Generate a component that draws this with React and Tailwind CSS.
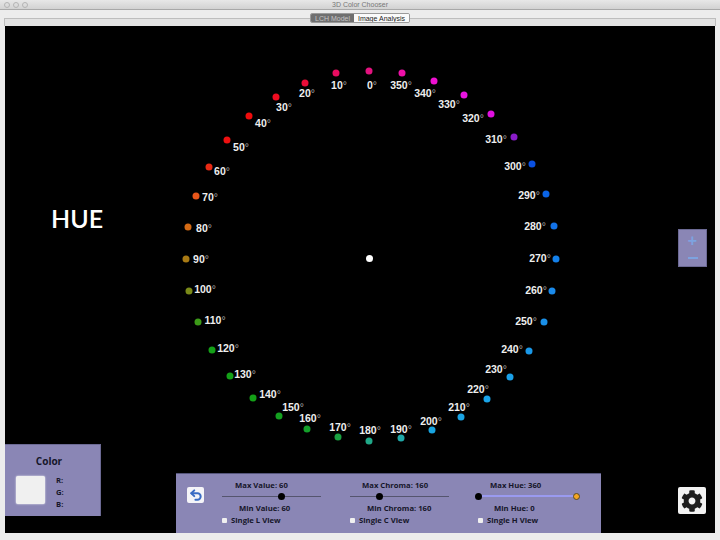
import React from 'react';
import { Undo2 } from 'lucide-react';
import { FaCog } from 'react-icons/fa';

// dot and label centres are in page coordinates, the canvas starts at 5,26
const hues = [
  { deg: 0, x: 369, y: 71, lx: 372, ly: 85, color: '#e3127f' },
  { deg: 350, x: 402, y: 73, lx: 401, ly: 85, color: '#ee10a8' },
  { deg: 340, x: 434, y: 81, lx: 425, ly: 93, color: '#ee10d0' },
  { deg: 330, x: 464, y: 95, lx: 449, ly: 104, color: '#e814e0' },
  { deg: 320, x: 491, y: 114, lx: 473, ly: 118, color: '#e010e0' },
  { deg: 310, x: 514, y: 137, lx: 496, ly: 139, color: '#8a1cc8' },
  { deg: 300, x: 532, y: 164, lx: 515, ly: 166, color: '#0a50e0' },
  { deg: 290, x: 546, y: 194, lx: 529, ly: 195, color: '#0a64e6' },
  { deg: 280, x: 554, y: 226, lx: 535, ly: 226, color: '#1272e8' },
  { deg: 270, x: 556, y: 259, lx: 540, ly: 258, color: '#1480ea' },
  { deg: 260, x: 552, y: 291, lx: 536, ly: 290, color: '#1a8aea' },
  { deg: 250, x: 544, y: 322, lx: 526, ly: 321, color: '#1a90e8' },
  { deg: 240, x: 529, y: 351, lx: 512, ly: 349, color: '#1a98e8' },
  { deg: 230, x: 510, y: 377, lx: 496, ly: 369, color: '#1aa0e8' },
  { deg: 220, x: 487, y: 399, lx: 478, ly: 389, color: '#1aa4e8' },
  { deg: 210, x: 461, y: 417, lx: 459, ly: 407, color: '#1aa4e4' },
  { deg: 200, x: 432, y: 430, lx: 431, ly: 421, color: '#18a4e0' },
  { deg: 190, x: 401, y: 438, lx: 401, ly: 429, color: '#20a8a8' },
  { deg: 180, x: 369, y: 441, lx: 370, ly: 430, color: '#20a888' },
  { deg: 170, x: 338, y: 437, lx: 340, ly: 427, color: '#1aa040' },
  { deg: 160, x: 307, y: 429, lx: 310, ly: 418, color: '#14a02a' },
  { deg: 150, x: 279, y: 416, lx: 293, ly: 407, color: '#14a020' },
  { deg: 140, x: 253, y: 398, lx: 270, ly: 394, color: '#14a018' },
  { deg: 130, x: 230, y: 376, lx: 245, ly: 374, color: '#14a018' },
  { deg: 120, x: 212, y: 350, lx: 228, ly: 348, color: '#14a018' },
  { deg: 110, x: 198, y: 322, lx: 215, ly: 320, color: '#3c9a18' },
  { deg: 100, x: 189, y: 291, lx: 205, ly: 289, color: '#7a8a18' },
  { deg: 90, x: 186, y: 259, lx: 201, ly: 259, color: '#a87a14' },
  { deg: 80, x: 188, y: 227, lx: 204, ly: 228, color: '#d46a14' },
  { deg: 70, x: 196, y: 196, lx: 210, ly: 197, color: '#e8561a' },
  { deg: 60, x: 209, y: 167, lx: 222, ly: 171, color: '#e82a14' },
  { deg: 50, x: 227, y: 140, lx: 241, ly: 147, color: '#ee1010' },
  { deg: 40, x: 249, y: 116, lx: 263, ly: 123, color: '#ee0c0c' },
  { deg: 30, x: 276, y: 97, lx: 284, ly: 107, color: '#ee0c20' },
  { deg: 20, x: 305, y: 83, lx: 307, ly: 93, color: '#ea0c38' },
  { deg: 10, x: 336, y: 73, lx: 339, ly: 85, color: '#e80c60' },
];

const panelText = "font-['Open_Sans',sans-serif] font-bold text-[7.7px] leading-[12px] text-[#16162a] whitespace-nowrap";

function HueDot({ hue }) {
  return (
    <>
      <span
        className="absolute w-[7px] h-[7px] rounded-full -translate-x-1/2 -translate-y-1/2"
        style={{ left: hue.x - 5, top: hue.y - 26, backgroundColor: hue.color }}
      />
      <span
        className="absolute -translate-x-1/2 -translate-y-1/2 font-['Liberation_Sans',sans-serif] font-bold text-[10.5px] leading-none text-[#eeeeee] whitespace-nowrap"
        style={{ left: hue.lx - 5, top: hue.ly - 26 }}
      >
        {hue.deg}
        <span className="font-normal text-[#aaaaaa]">°</span>
      </span>
    </>
  );
}

function SliderColumn({ maxLabel, minLabel, viewLabel, maxClass, minClass, children }) {
  return (
    <div className="flex flex-col w-[99px]">
      <div className={`${panelText} ${maxClass}`}>{maxLabel}</div>
      <div className="relative h-[10px] w-full flex items-center">{children}</div>
      <div className={`${panelText} ${minClass}`}>{minLabel}</div>
      <div className="flex items-center gap-[4px]">
        <span className="w-[5px] h-[5px] bg-[#f0f0f0] rounded-[1px]" />
        <span className={panelText}>{viewLabel}</span>
      </div>
    </div>
  );
}

export default function App() {
  return (
    <div className="w-[720px] h-[540px] bg-[#ececec] flex flex-col overflow-hidden">
      {/* window title bar */}
      <div className="relative h-[10px] shrink-0 bg-gradient-to-b from-[#e8e8e8] to-[#d2d2d2] border-b border-[#a8a8a8] flex items-center justify-center">
        <div className="absolute left-[4px] top-[2px] flex gap-[3px]">
          <span className="w-[6px] h-[6px] rounded-full border border-[#b4b4b4]" />
          <span className="w-[6px] h-[6px] rounded-full border border-[#b4b4b4]" />
          <span className="w-[6px] h-[6px] rounded-full border border-[#b4b4b4]" />
        </div>
        <span className="font-['Liberation_Sans',sans-serif] text-[7px] leading-none text-[#777777]">3D Color Chooser</span>
      </div>

      {/* tab strip */}
      <div className="relative h-[16px] shrink-0 mx-[4px] flex justify-center">
        <div className="absolute left-0 right-0 top-[8px] h-[8px] bg-[#e2e2e2] border border-b-0 border-[#bdbdbd]" />
        <div className="relative mt-[3px] h-[10px] flex rounded-[2px] overflow-hidden border border-[#9a9a9a] font-['Liberation_Sans',sans-serif] text-[7px] leading-none">
          <div className="w-[43px] bg-[#6f6f6f] text-[#c4c4c4] flex items-center justify-center">LCH Model</div>
          <div className="w-[55px] bg-[#fafafa] text-[#222222] flex items-center justify-center">Image Analysis</div>
        </div>
      </div>

      {/* canvas */}
      <div className="relative flex-1 ml-[5px] mr-[5px] bg-black">
        <div className="absolute left-[46px] top-[176px] font-['Lato',sans-serif] font-semibold text-[25px] leading-[32px] text-white">HUE</div>

        {hues.map((hue) => (
          <HueDot key={hue.deg} hue={hue} />
        ))}
        <span className="absolute left-[361px] top-[229px] w-[7px] h-[7px] rounded-full bg-white" />

        {/* zoom buttons */}
        <div className="absolute left-[673px] top-[203px] w-[29px] h-[38px] bg-[#8a86b5] border border-[#6c6a94] flex flex-col items-center justify-between py-[5px]">
          <span className="text-[#7da3e0] font-['Liberation_Sans',sans-serif] font-bold text-[16px] leading-[12px]">+</span>
          <span className="w-[10px] h-[2px] mb-[2px] bg-[#7da3e0]" />
        </div>

        {/* colour panel */}
        <div className="absolute left-0 top-[418px] w-[96px] h-[72px] bg-[#8a86b5] border-t border-r border-[#6c6a94] flex flex-col">
          <div className="h-[31px] flex items-center justify-center pr-[7px] pt-[2px] font-['Open_Sans',sans-serif] font-bold text-[10px] text-[#16162a]">Color</div>
          <div className="flex pl-[11px] gap-[11px]">
            <div className="w-[29px] h-[28px] bg-[#f0f0f0] rounded-[2px] shadow-[0_0_2px_#ffffff]" />
            <div className={`${panelText} flex flex-col -mt-[2px]`}>
              <span>R:</span>
              <span>G:</span>
              <span>B:</span>
            </div>
          </div>
        </div>

        {/* range controls */}
        <div className="absolute left-[171px] bottom-0 w-[425px] h-[60px] bg-[#8a86b5] border-t border-[#55557a] flex pl-[11px] pt-[6px]">
          <div className="w-[17px] h-[16px] mt-[7px] bg-[#f4f4f8] rounded-[2px] flex items-center justify-center">
            <Undo2 size={14} strokeWidth={3.4} className="text-[#3a6cc4]" />
          </div>
          <div className="flex gap-[29px] ml-[18px]">
            <SliderColumn maxLabel="Max Value: 60" minLabel="Min Value: 60" viewLabel="Single L View" maxClass="ml-[13px] -mt-[1px]" minClass="ml-[17px] mt-[1px]">
              <div className="w-full h-[1px] bg-[#55556e]" />
              <span className="absolute left-[56px] w-[7px] h-[7px] rounded-full bg-black" />
            </SliderColumn>
            <SliderColumn maxLabel="Max Chroma: 160" minLabel="Min Chroma: 160" viewLabel="Single C View" maxClass="ml-[12px] -mt-[1px]" minClass="ml-[17px] mt-[1px]">
              <div className="w-full h-[1px] bg-[#55556e]" />
              <span className="absolute left-[26px] w-[7px] h-[7px] rounded-full bg-black" />
            </SliderColumn>
            <SliderColumn maxLabel="Max Hue: 360" minLabel="Min Hue: 0" viewLabel="Single H View" maxClass="ml-[12px] -mt-[1px]" minClass="ml-[16px] mt-[1px]">
              <div className="w-full h-[2px] bg-[#9a9af0]" />
              <span className="absolute left-[-3px] w-[7px] h-[7px] rounded-full bg-black" />
              <span className="absolute right-[-3px] w-[7px] h-[7px] rounded-full bg-[#f5a623] border border-[#5a4a20]" />
            </SliderColumn>
          </div>
        </div>

        {/* settings */}
        <div className="absolute left-[673px] top-[461px] w-[28px] h-[27px] bg-[#f2f2f2] rounded-[2px] flex items-center justify-center">
          <FaCog size={22} className="text-[#1c1c1c]" />
        </div>
      </div>

      <div className="h-[7px] shrink-0" />
    </div>
  );
}
